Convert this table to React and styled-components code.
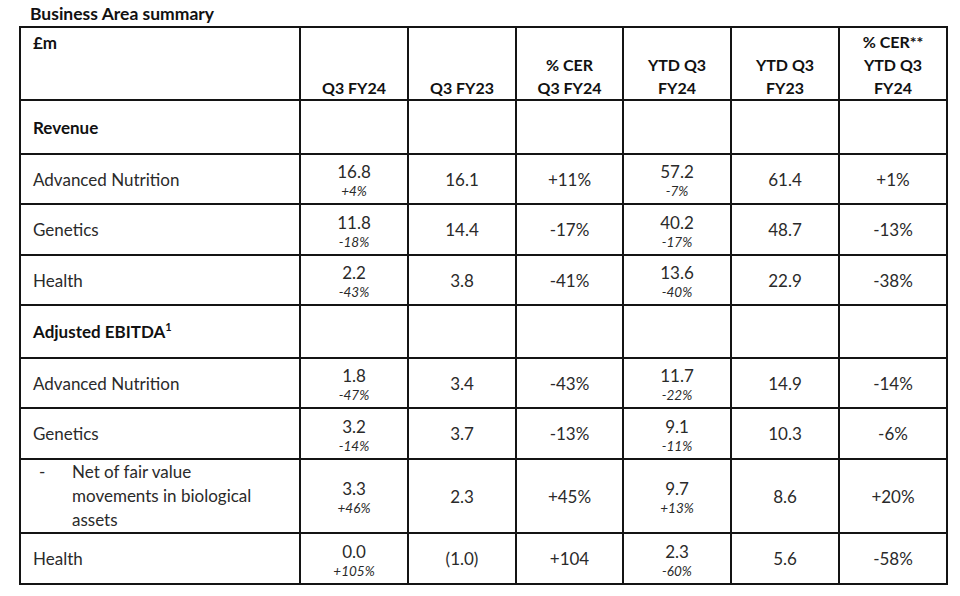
import React from 'react';
import styled, { createGlobalStyle } from 'styled-components';

const GlobalStyle = createGlobalStyle`
    body {
        margin: 0;
        background: #fff;
        font-family: Lato, "Liberation Sans", sans-serif;
        color: #222;
    }
`;

const columns = [280, 108, 108, 107, 108, 108, 108];

const sections = [
    {
        title: 'Revenue',
        height: 54,
        rows: [
            { label: 'Advanced Nutrition', height: 50, cells: [['16.8', '+4%'], ['16.1'], ['+11%'], ['57.2', '-7%'], ['61.4'], ['+1%']] },
            { label: 'Genetics', height: 51, cells: [['11.8', '-18%'], ['14.4'], ['-17%'], ['40.2', '-17%'], ['48.7'], ['-13%']] },
            { label: 'Health', height: 50, cells: [['2.2', '-43%'], ['3.8'], ['-41%'], ['13.6', '-40%'], ['22.9'], ['-38%']] },
        ],
    },
    {
        title: 'Adjusted EBITDA',
        sup: '1',
        height: 53,
        rows: [
            { label: 'Advanced Nutrition', height: 50, cells: [['1.8', '-47%'], ['3.4'], ['-43%'], ['11.7', '-22%'], ['14.9'], ['-14%']] },
            { label: 'Genetics', height: 51, cells: [['3.2', '-14%'], ['3.7'], ['-13%'], ['9.1', '-11%'], ['10.3'], ['-6%']] },
            { label: 'Net of fair value movements in biological assets', sub: true, height: 74, cells: [['3.3', '+46%'], ['2.3'], ['+45%'], ['9.7', '+13%'], ['8.6'], ['+20%']] },
            { label: 'Health', height: 51, cells: [['0.0', '+105%'], ['(1.0)'], ['+104'], ['2.3', '-60%'], ['5.6'], ['-58%']] },
        ],
    },
];

const headers = [
    ['Q3 FY24'],
    ['Q3 FY23'],
    ['% CER', 'Q3 FY24'],
    ['YTD Q3', 'FY24'],
    ['YTD Q3', 'FY23'],
    ['% CER**', 'YTD Q3', 'FY24'],
];

const App = () => {
    return (
        <Page>
            <GlobalStyle />
            <Title>Business Area summary</Title>
            <Table>
                <colgroup>
                    {columns.map((w, i) => (
                        <col key={`col-${i}`} style={{ width: w }} />
                    ))}
                </colgroup>
                <tbody>
                    <Row $height={73}>
                        <CornerCell>£m</CornerCell>
                        {headers.map((lines, i) => (
                            <HeadCell key={`head-${i}`}>
                                {lines.map((line) => (
                                    <HeadLine key={line}>{line}</HeadLine>
                                ))}
                            </HeadCell>
                        ))}
                    </Row>
                    {sections.map((section) => (
                        <React.Fragment key={section.title}>
                            <Row $height={section.height}>
                                <SectionCell>
                                    {section.title}
                                    {section.sup && <Sup>{section.sup}</Sup>}
                                </SectionCell>
                                {headers.map((_, i) => (
                                    <ValueCell key={`empty-${i}`} />
                                ))}
                            </Row>
                            {section.rows.map((row, r) => (
                                <Row key={`${section.title}-${r}`} $height={row.height}>
                                    {row.sub ? (
                                        <LabelCell>
                                            <SubLabel>
                                                <Dash>-</Dash>
                                                <SubText>{row.label}</SubText>
                                            </SubLabel>
                                        </LabelCell>
                                    ) : (
                                        <LabelCell>{row.label}</LabelCell>
                                    )}
                                    {row.cells.map((cell, c) => (
                                        <ValueCell key={`cell-${c}`} $stacked={!!cell[1]}>
                                            <Value>{cell[0]}</Value>
                                            {cell[1] && <Change>{cell[1]}</Change>}
                                        </ValueCell>
                                    ))}
                                </Row>
                            ))}
                        </React.Fragment>
                    ))}
                </tbody>
            </Table>
        </Page>
    );
};

const Page = styled.div`
    width: 960px;
    height: 596px;
    padding: 3px 0 0 19px;
    box-sizing: border-box;
`;
const Title = styled.div`
    font-size: 17.5px;
    font-weight: 700;
    color: #111;
    padding-left: 11px;
    height: 23px;
    line-height: 22px;
`;
const Table = styled.table`
    border-collapse: collapse;
    table-layout: fixed;
    width: 929px;
    font-size: 17px;
`;
const Row = styled.tr`
    height: ${({ $height }) => $height}px;
`;
const Cell = styled.td`
    border: 2px solid #141414;
    padding: 0;
    color: #2a2a2a;
`;
const CornerCell = styled(Cell)`
    vertical-align: top;
    padding: 4px 0 0 12px;
    font-weight: 700;
    color: #111;
`;
const HeadCell = styled(Cell)`
    vertical-align: bottom;
    text-align: center;
    font-weight: 700;
    font-size: 16px;
    color: #111;
    padding-bottom: 0;
`;
const HeadLine = styled.div`
    line-height: 23px;
`;
const SectionCell = styled(Cell)`
    font-weight: 700;
    color: #111;
    padding-left: 12px;
`;
const Sup = styled.sup`
    font-size: 11px;
    line-height: 0;
`;
const LabelCell = styled(Cell)`
    padding-left: 12px;
`;
const SubLabel = styled.div`
    display: flex;
    line-height: 24px;
`;
const Dash = styled.span`
    width: 33px;
    padding-left: 6px;
    flex: none;
`;
const SubText = styled.span`
    width: 200px;
`;
const ValueCell = styled(Cell)`
    text-align: center;
    vertical-align: middle;
    padding-top: ${({ $stacked }) => ($stacked ? 4 : 0)}px;
`;
const Value = styled.div`
    line-height: 21px;
`;
const Change = styled.div`
    font-size: 13.5px;
    font-style: italic;
    line-height: 19px;
`;

export default App;
